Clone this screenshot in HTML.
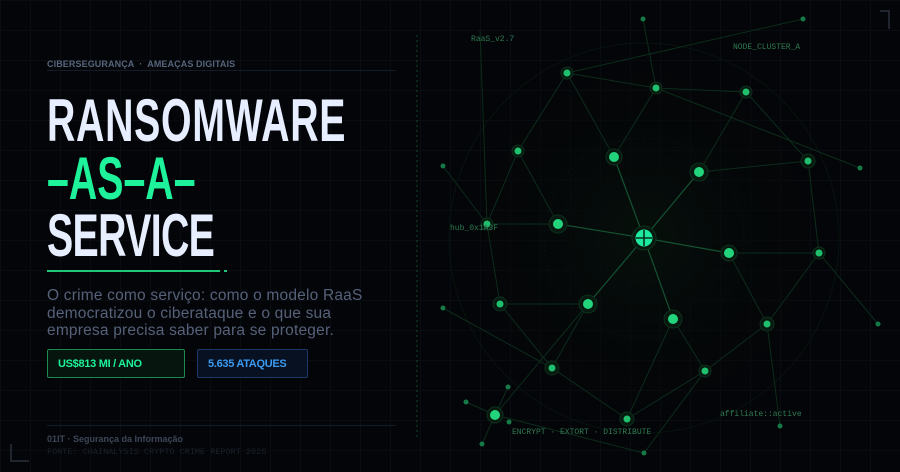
<!DOCTYPE html>
<html><head><meta charset="utf-8"><style>
*{margin:0;padding:0;box-sizing:border-box}
body{width:900px;height:472px;overflow:hidden;background:#040508;position:relative;font-family:"Liberation Sans",sans-serif}
.grid{position:absolute;inset:0;background-image:linear-gradient(to right,#090c11 1px,transparent 1px),linear-gradient(to bottom,#090c11 1px,transparent 1px);background-size:30px 30px}
.abs{position:absolute}
.kick{left:47px;top:59px;font-size:9px;font-weight:bold;color:#56657c;letter-spacing:0.1px}
.rule{left:47px;top:70px;width:349px;height:1px;background:#141c28}
.t{left:47px;font-size:60px;font-weight:bold;line-height:60px;transform:scaleX(0.655);transform-origin:left;white-space:nowrap;color:#e6eeff;letter-spacing:1px}
.g{color:#1ef29a}
.sub{left:47px;top:287px;font-size:15.5px;line-height:17.5px;color:#56627a;letter-spacing:0.2px;width:330px}
.b1{left:47px;top:349px;width:138px;height:29px;border:1px solid #1c8a4e;background:#06160e;border-radius:2px;color:#1ef29a;font-size:11px;font-weight:bold;padding:8px 10px;letter-spacing:-0.3px}
.b2{left:197px;top:349px;width:111px;height:29px;border:1px solid #1c3868;background:#071122;border-radius:2px;color:#3b9af0;font-size:11px;font-weight:bold;padding:8px 10px;letter-spacing:-0.3px}
.rule2{left:47px;top:425px;width:349px;height:1px;background:#141c28}
.f1{left:47px;top:434px;font-size:9px;font-weight:bold;color:#3e4658}
.f2{left:47px;top:447px;font-size:8.5px;font-family:"Liberation Mono",monospace;color:#1b222c}
</style></head><body>
<div class="grid"></div>
<svg class="abs" style="left:0;top:0" width="900" height="472">
<defs><radialGradient id="rg" cx="644" cy="238" r="200" gradientUnits="userSpaceOnUse"><stop offset="0" stop-color="#06100b"/><stop offset="1" stop-color="#040508" stop-opacity="0"/></radialGradient></defs>
<circle cx="644" cy="238" r="200" fill="url(#rg)"/>
<circle cx="644" cy="238" r="100" fill="none" stroke="#08130d" stroke-dasharray="2 3"/>
<circle cx="644" cy="238" r="195" fill="none" stroke="#08130d"/>
<line x1="417" y1="35" x2="417" y2="440" stroke="#114a28" stroke-dasharray="2 3"/>
<g stroke="#0c2c1a" stroke-width="1" fill="none">
<path d="M644 238L614 157M644 238L699 172M644 238L558 224M644 238L729 253M644 238L588 304M644 238L673 319" stroke="#145232" stroke-width="1.2"/>
<path d="M567 73L518 151M567 73L614 157M567 73L656 88M656 88L614 157M656 88L746 92M746 92L699 172M699 172L808 161M808 161L819 253M729 253L819 253M729 253L767 324M819 253L767 324M767 324L705 371M673 319L705 371M673 319L627 419M588 304L552 368M588 304L495 415M500 304L588 304M500 304L552 368M518 151L558 224M518 151L487 224M487 224L558 224M487 224L500 304M552 368L627 419M705 371L627 419M495 415L508 387M495 415L466 402M495 415L482 444M567 73L803 19M656 88L643 19M656 88L860 168M746 92L808 161M819 253L878 324M443 166L487 224M443 308L552 368M780 426L767 324M495 415L644 453M705 371L644 453M480 30L487 224"/>
</g>
<g fill="#081a10" stroke="#0d301d">
<circle cx="567" cy="73" r="6"/><circle cx="656" cy="88" r="6"/><circle cx="746" cy="92" r="6"/><circle cx="518" cy="151" r="6"/><circle cx="614" cy="157" r="8"/><circle cx="699" cy="172" r="9"/><circle cx="808" cy="161" r="7"/><circle cx="487" cy="224" r="6"/><circle cx="558" cy="224" r="9"/><circle cx="729" cy="253" r="8"/><circle cx="819" cy="253" r="6"/><circle cx="500" cy="304" r="7"/><circle cx="588" cy="304" r="9"/><circle cx="673" cy="319" r="9"/><circle cx="767" cy="324" r="7"/><circle cx="552" cy="368" r="7"/><circle cx="705" cy="371" r="6"/><circle cx="495" cy="415" r="8"/><circle cx="627" cy="419" r="7"/><circle cx="644" cy="238" r="12"/>
</g>
<g fill="#1fbf6e">
<circle cx="567" cy="73" r="3.5"/><circle cx="656" cy="88" r="3.5"/><circle cx="746" cy="92" r="3.5"/><circle cx="518" cy="151" r="3.5"/><circle cx="808" cy="161" r="3.5"/><circle cx="487" cy="224" r="3.5"/><circle cx="819" cy="253" r="3.5"/><circle cx="500" cy="304" r="3.5"/><circle cx="767" cy="324" r="3.5"/><circle cx="552" cy="368" r="3.5"/><circle cx="705" cy="371" r="3.5"/><circle cx="627" cy="419" r="3.5"/>
</g>
<g fill="#22d47c">
<circle cx="614" cy="157" r="5"/><circle cx="699" cy="172" r="5"/><circle cx="558" cy="224" r="5"/><circle cx="729" cy="253" r="5"/><circle cx="588" cy="304" r="5"/><circle cx="673" cy="319" r="5"/><circle cx="495" cy="415" r="5"/>
</g>
<g fill="#157a46">
<circle cx="643" cy="19" r="2.5"/><circle cx="803" cy="19" r="2.5"/><circle cx="860" cy="168" r="2.5"/><circle cx="443" cy="166" r="2.5"/><circle cx="443" cy="308" r="2.5"/><circle cx="878" cy="324" r="2.5"/><circle cx="780" cy="426" r="2.5"/><circle cx="508" cy="387" r="2.5"/><circle cx="466" cy="402" r="2.5"/><circle cx="509" cy="422" r="2.5"/><circle cx="482" cy="444" r="2.5"/><circle cx="644" cy="453" r="2.5"/>
</g>
<circle cx="644" cy="238" r="8.5" fill="#1de9a0"/>
<path d="M644 230V246M636 238H652" stroke="#063020" stroke-width="1.6"/>
<g font-family="Liberation Mono,monospace" font-size="8" fill="#2f7a52">
<text x="471" y="41">RaaS_v2.7</text>
<text x="733" y="49">NODE_CLUSTER_A</text>
<text x="450" y="230">hub_0x1A3F</text>
<text x="512" y="434">ENCRYPT · EXTORT · DISTRIBUTE</text>
<text x="720" y="416">affiliate::active</text>
</g>
<path d="M880 11H889V29" stroke="#3a4456" fill="none" stroke-width="1"/>
<path d="M11 444V461H29" stroke="#3a4456" fill="none" stroke-width="1"/>
</svg>
<div class="abs kick">CIBERSEGURANÇA &nbsp;·&nbsp; AMEAÇAS DIGITAIS</div>
<div class="abs rule"></div>
<div class="abs t" style="top:91px">RANSOMWARE</div>
<div class="abs t g" style="top:149px;letter-spacing:0">–AS–A–</div>
<div class="abs t" style="top:206px;letter-spacing:-1px">SERVICE</div>
<div class="abs" style="left:47px;top:270px;width:173px;height:2px;background:#1ec878"></div>
<div class="abs" style="left:224px;top:270px;width:3px;height:2px;background:#1ec878"></div>
<div class="abs sub">O crime como serviço: como o modelo RaaS democratizou o ciberataque e o que sua empresa precisa saber para se proteger.</div>
<div class="abs b1">US$813 MI / ANO</div>
<div class="abs b2">5.635 ATAQUES</div>
<div class="abs rule2"></div>
<div class="abs f1">01IT · Segurança da Informação</div>
<div class="abs f2">FONTE: CHAINALYSIS CRYPTO CRIME REPORT 2025</div>
</body></html>
